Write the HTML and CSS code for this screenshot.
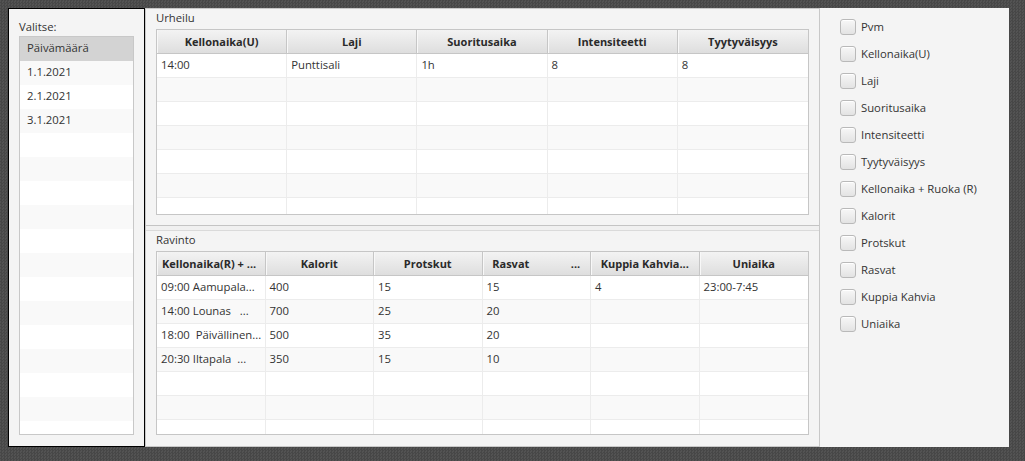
FILE: index.html
```html
<!DOCTYPE html>
<html lang="fi">
<head>
<meta charset="utf-8">
<title>Urheilu ja ravinto</title>
<link rel="stylesheet" href="styles.css">
</head>
<body>
<div class="window">
  <aside class="side-left">
    <div class="label">Valitse:</div>
    <div class="list">
      <div class="item selected">Päivämäärä</div>
      <div class="item">1.1.2021</div>
      <div class="item">2.1.2021</div>
      <div class="item">3.1.2021</div>
      <div class="item"></div><div class="item"></div><div class="item"></div><div class="item"></div>
      <div class="item"></div><div class="item"></div><div class="item"></div><div class="item"></div>
      <div class="item"></div><div class="item"></div><div class="item"></div><div class="item"></div>
      <div class="item"></div><div class="item"></div>
    </div>
  </aside>

  <main class="middle">
    <section class="pane top-pane">
      <div class="label">Urheilu</div>
      <div class="table t5">
        <div class="thead">
          <div class="th">Kellonaika(U)</div>
          <div class="th">Laji</div>
          <div class="th">Suoritusaika</div>
          <div class="th">Intensiteetti</div>
          <div class="th">Tyytyväisyys</div>
        </div>
        <div class="tbody body-top">
          <div class="tr"><div class="td">14:00</div><div class="td">Punttisali</div><div class="td">1h</div><div class="td">8</div><div class="td">8</div></div>
          <div class="tr"><div class="td"></div><div class="td"></div><div class="td"></div><div class="td"></div><div class="td"></div></div>
          <div class="tr"><div class="td"></div><div class="td"></div><div class="td"></div><div class="td"></div><div class="td"></div></div>
          <div class="tr"><div class="td"></div><div class="td"></div><div class="td"></div><div class="td"></div><div class="td"></div></div>
          <div class="tr"><div class="td"></div><div class="td"></div><div class="td"></div><div class="td"></div><div class="td"></div></div>
          <div class="tr"><div class="td"></div><div class="td"></div><div class="td"></div><div class="td"></div><div class="td"></div></div>
          <div class="tr"><div class="td"></div><div class="td"></div><div class="td"></div><div class="td"></div><div class="td"></div></div>
        </div>
      </div>
    </section>

    <div class="divider"></div>

    <section class="pane bottom-pane">
      <div class="label">Ravinto</div>
      <div class="table t6">
        <div class="thead">
          <div class="th th-start">Kellonaika(R) + ...</div>
          <div class="th">Kalorit</div>
          <div class="th">Protskut</div>
          <div class="th"><span class="split"><span>Rasvat</span><span>...</span></span></div>
          <div class="th">Kuppia Kahvia...</div>
          <div class="th">Uniaika</div>
        </div>
        <div class="tbody body-bottom">
          <div class="tr"><div class="td">09:00 Aamupala...</div><div class="td">400</div><div class="td">15</div><div class="td">15</div><div class="td">4</div><div class="td">23:00-7:45</div></div>
          <div class="tr"><div class="td">14:00 Lounas   ...</div><div class="td">700</div><div class="td">25</div><div class="td">20</div><div class="td"></div><div class="td"></div></div>
          <div class="tr"><div class="td">18:00  Päivällinen...</div><div class="td">500</div><div class="td">35</div><div class="td">20</div><div class="td"></div><div class="td"></div></div>
          <div class="tr"><div class="td">20:30 Iltapala  ...</div><div class="td">350</div><div class="td">15</div><div class="td">10</div><div class="td"></div><div class="td"></div></div>
          <div class="tr"><div class="td"></div><div class="td"></div><div class="td"></div><div class="td"></div><div class="td"></div><div class="td"></div></div>
          <div class="tr"><div class="td"></div><div class="td"></div><div class="td"></div><div class="td"></div><div class="td"></div><div class="td"></div></div>
          <div class="tr"><div class="td"></div><div class="td"></div><div class="td"></div><div class="td"></div><div class="td"></div><div class="td"></div></div>
        </div>
      </div>
    </section>
  </main>

  <aside class="side-right">
    <label class="check"><span class="box"></span>Pvm</label>
    <label class="check"><span class="box"></span>Kellonaika(U)</label>
    <label class="check"><span class="box"></span>Laji</label>
    <label class="check"><span class="box"></span>Suoritusaika</label>
    <label class="check"><span class="box"></span>Intensiteetti</label>
    <label class="check"><span class="box"></span>Tyytyväisyys</label>
    <label class="check"><span class="box"></span>Kellonaika + Ruoka (R)</label>
    <label class="check"><span class="box"></span>Kalorit</label>
    <label class="check"><span class="box"></span>Protskut</label>
    <label class="check"><span class="box"></span>Rasvat</label>
    <label class="check"><span class="box"></span>Kuppia Kahvia</label>
    <label class="check"><span class="box"></span>Uniaika</label>
  </aside>
</div>
</body>
</html>
```

FILE: styles.css
```css
* { box-sizing: border-box; }

html, body {
  margin: 0;
  height: 461px;
  overflow: hidden;
}

body {
  padding: 8px 16px 14px 8px;
  background-color: #4c4c4c;
  background-image: repeating-conic-gradient(#474747 0 25%, #535353 0 50%);
  background-size: 3px 3px;
  font-family: "Open Sans", "Noto Sans", sans-serif;
  font-size: 11.3px;
  color: #333333;
}

.window {
  display: flex;
  width: 1001px;
  height: 439px;
}

.label {
  height: 18px;
  line-height: 18px;
  white-space: nowrap;
}

/* left */
.side-left {
  width: 137px;
  height: 439px;
  border: 1px solid #000;
  background: #f4f4f4;
  padding: 10px 10px 11px 10px;
  display: flex;
  flex-direction: column;
}
.side-left .label {
  height: 17px;
  line-height: 16px;
}
.list {
  flex: 1;
  border: 1px solid #c8c8c8;
  background: #fff;
  overflow: hidden;
}
.item {
  height: 24px;
  line-height: 22px;
  padding-left: 7px;
  white-space: nowrap;
}
.item:nth-child(even) { background: #f9f9f9; }
.item.selected { background: #d3d3d3; }

/* middle */
.middle {
  width: 675px;
  height: 439px;
  border: 1px solid #c8c8c8;
  background: #f4f4f4;
  display: flex;
  flex-direction: column;
}
.pane {
  padding: 0 10px;
  display: flex;
  flex-direction: column;
}
.top-pane { padding-bottom: 10px; }
.bottom-pane { padding-bottom: 11px; flex: 1; }
.pane .label { margin-bottom: 2px; line-height: 17px; }

.divider {
  height: 6px;
  border-top: 1px solid #c4c4c4;
  border-bottom: 1px solid #dadada;
  background: #f0f0f0;
}

.table {
  border: 1px solid #c6c6c6;
  background: #fff;
}
.thead, .tr {
  display: grid;
}
.t5 .thead, .t5 .tr { grid-template-columns: repeat(5, minmax(0, 1fr)); }
.t6 .thead, .t6 .tr { grid-template-columns: repeat(6, minmax(0, 1fr)); }

.thead {
  height: 24px;
  border-bottom: 1px solid #c6c6c6;
  background: linear-gradient(#f3f3f3, #dedede);
}
.th {
  border-right: 1px solid #c6c6c6;
  box-shadow: inset 1px 0 0 #f8f8f8;
  font-size: 11px;
  font-weight: 700;
  color: #2a2a2a;
  line-height: 23px;
  white-space: nowrap;
  overflow: hidden;
  display: flex;
  justify-content: center;
}
.th.th-start { justify-content: flex-start; padding-left: 5px; }
.th:last-child { border-right: none; }
.split {
  display: flex;
  justify-content: space-between;
  width: 88px;
}

.tbody { overflow: hidden; }
.body-top { height: 160px; }
.body-bottom { height: 158px; }

.tr {
  height: 24px;
  border-bottom: 1px solid #ececec;
}
.tr:nth-child(even) { background: #f9f9f9; }
.td {
  border-right: 1px solid #ececec;
  padding-left: 4px;
  line-height: 21px;
  white-space: pre;
  overflow: hidden;
}
.td:last-child { border-right: none; }

/* right */
.side-right {
  width: 189px;
  height: 439px;
  background: #f4f4f4;
  padding: 5px 0 0 20px;
  display: flex;
  flex-direction: column;
}
.check {
  height: 27px;
  display: flex;
  align-items: center;
  gap: 5px;
  white-space: nowrap;
}
.box {
  width: 16px;
  height: 16px;
  flex: none;
  border: 1px solid #b9b9b9;
  border-radius: 3px;
  background: linear-gradient(#f7f7f7, #e3e3e3);
  box-shadow: inset 0 1px 0 #ffffff;
}
```
